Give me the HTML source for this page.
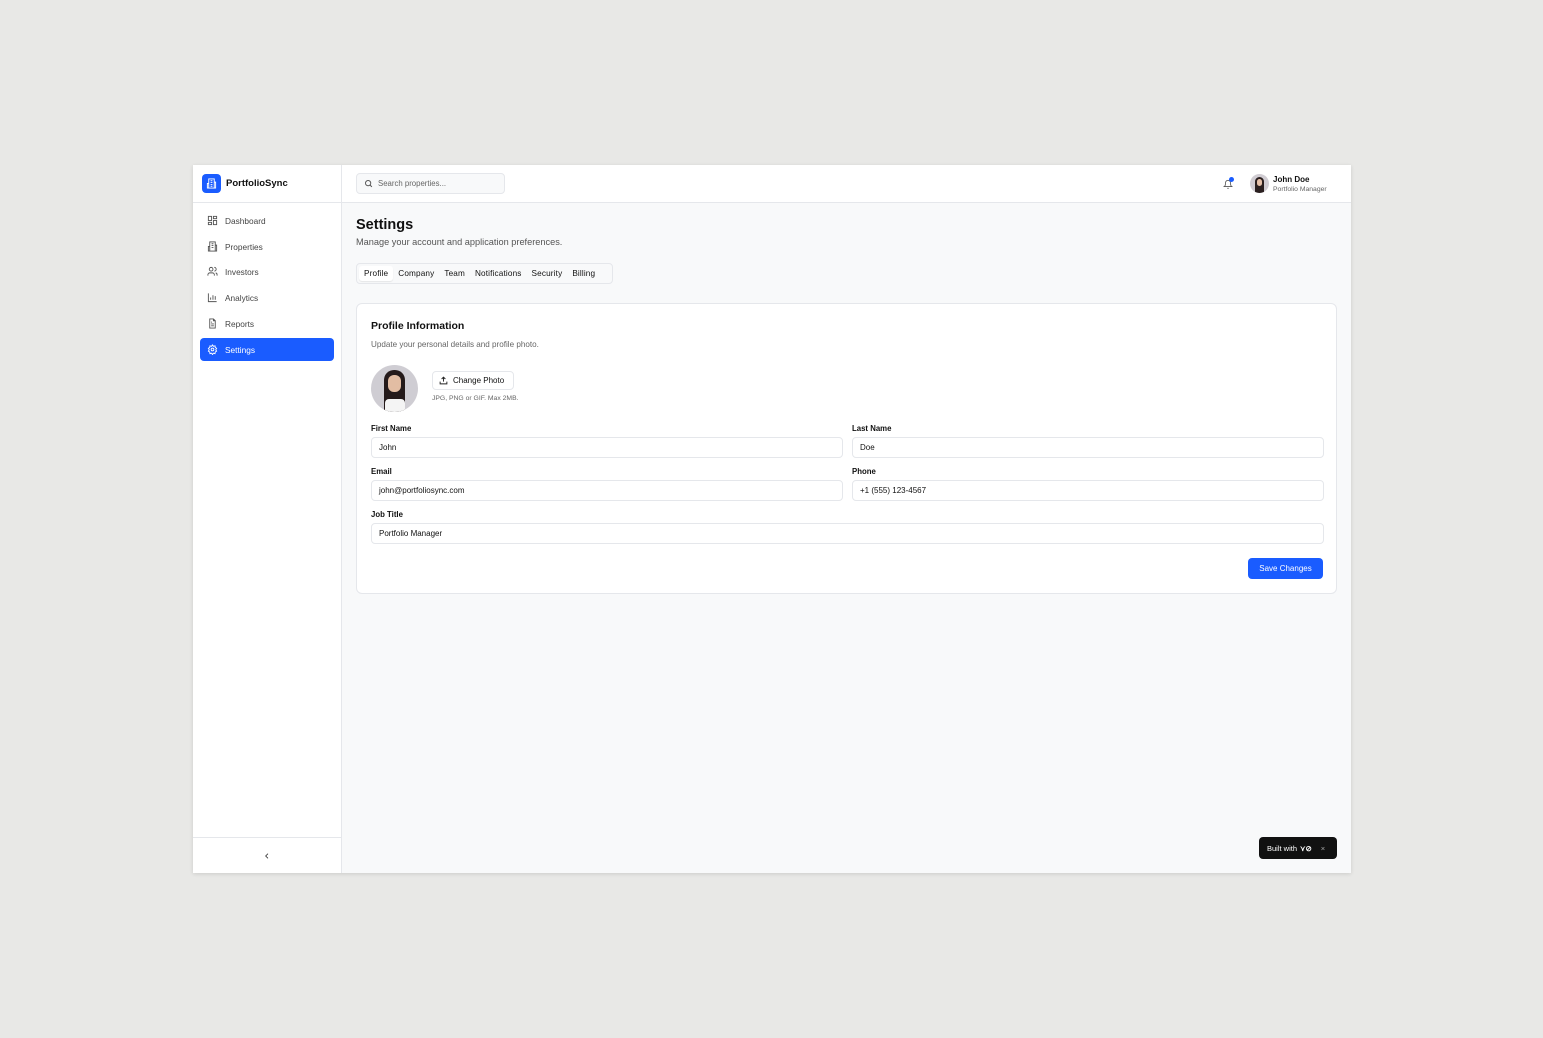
<!DOCTYPE html><html><head><style>
*{box-sizing:border-box;margin:0;padding:0}
body{width:1543px;height:1038px;background:#e8e8e6;font-family:"Liberation Sans",sans-serif;position:relative;overflow:hidden;color:#111}
.frame{position:absolute;left:193px;top:165px;width:1158px;height:708px;background:#f8f9fa;box-shadow:0 1px 4px rgba(0,0,0,.12)}
.side{position:absolute;left:0;top:0;width:149px;height:708px;background:#fff;border-right:1px solid #e5e7eb}
.logo{height:38px;border-bottom:1px solid #e5e7eb;display:flex;align-items:center;padding-left:9px;font-weight:bold;font-size:9.5px}
.logo .ic{width:19px;height:19px;background:#1a5cff;border-radius:4px;margin-right:5px;display:flex;align-items:center;justify-content:center}
.nav{position:absolute;left:7px;width:134px;height:23px;display:flex;align-items:center;padding-left:7px;font-size:8.3px;color:#444;border-radius:4px}
.nav svg{margin-right:7px}
.nav.act{background:#1a5cff;color:#fff;}
.coll{position:absolute;bottom:0;left:0;width:148px;height:36px;border-top:1px solid #e5e7eb;display:flex;align-items:center;justify-content:center}
.top{position:absolute;left:149px;top:0;right:0;height:38px;background:#fff;border-bottom:1px solid #e5e7eb}
.search{position:absolute;left:14px;top:8px;width:149px;height:21px;border:1px solid #e5e7eb;background:#f8f9fa;border-radius:4px;font-size:7.8px;color:#666;display:flex;align-items:center;padding-left:7px}
.search svg{margin-right:5px}
h1{position:absolute;left:163px;top:52px;font-size:14.5px;font-weight:bold}
.sub{position:absolute;left:163px;top:72px;font-size:9.2px;color:#555}
.tabs{position:absolute;left:163px;top:98px;width:257px;height:21px;border:1px solid #e5e7eb;border-radius:4px;background:#f8f9fa;display:flex;align-items:center;padding:0 2px;font-size:8.2px;letter-spacing:.15px}
.tabs span{padding:3px 5px}
.tabs span.a{background:#fff;border-radius:3px;box-shadow:0 1px 1px rgba(0,0,0,.08)}
.card{position:absolute;left:163px;top:138px;width:981px;height:291px;background:#fff;border:1px solid #e5e7eb;border-radius:6px}
.ct{position:absolute;left:14px;top:16px;font-size:10.5px;font-weight:bold}
.cs{position:absolute;left:14px;top:36px;font-size:8.1px;color:#666}
.lbl{position:absolute;font-size:7.8px;font-weight:bold}
.inp{position:absolute;height:21px;border:1px solid #e5e7eb;border-radius:4px;font-size:8px;display:flex;align-items:center;padding-left:7px}
.btn{position:absolute;right:13px;top:254px;width:75px;height:21px;background:#1a5cff;color:#fff;border-radius:4px;font-size:8px;display:flex;align-items:center;justify-content:center}
</style></head><body>
<div class="frame">
<div class="side">
<div class="logo"><div class="ic"><svg width="11" height="11" viewBox="0 0 24 24" fill="none" stroke="#fff" stroke-width="2"><rect x="6" y="2" width="12" height="20"/><path d="M6 12H3v10h3M18 9h3v13h-3M10 6h4M10 10h4M10 14h4M10 18h4"/></svg></div>PortfolioSync</div>
<div class="nav" style="top:44px"><svg width="11" height="11" viewBox="0 0 24 24" fill="none" stroke="#555" stroke-width="2"><rect x="3" y="3" width="7" height="9"/><rect x="14" y="3" width="7" height="5"/><rect x="14" y="12" width="7" height="9"/><rect x="3" y="16" width="7" height="5"/></svg>Dashboard</div>
<div class="nav" style="top:70px"><svg width="11" height="11" viewBox="0 0 24 24" fill="none" stroke="#555" stroke-width="2"><rect x="6" y="2" width="12" height="20"/><path d="M6 12H3v10h3M18 9h3v13h-3M10 6h4M10 10h4M10 14h4"/></svg>Properties</div>
<div class="nav" style="top:95px"><svg width="11" height="11" viewBox="0 0 24 24" fill="none" stroke="#555" stroke-width="2"><circle cx="9" cy="7" r="4"/><path d="M2 21v-2a4 4 0 0 1 4-4h6a4 4 0 0 1 4 4v2M16 3a4 4 0 0 1 0 8M22 21v-2a4 4 0 0 0-3-4"/></svg>Investors</div>
<div class="nav" style="top:121px"><svg width="11" height="11" viewBox="0 0 24 24" fill="none" stroke="#555" stroke-width="2"><path d="M3 3v18h18M8 17v-5M13 17V7M18 17v-8"/></svg>Analytics</div>
<div class="nav" style="top:147px"><svg width="11" height="11" viewBox="0 0 24 24" fill="none" stroke="#555" stroke-width="2"><path d="M14 2H6v20h12V6z"/><path d="M14 2v4h4M9 13h6M9 17h6M9 9h2"/></svg>Reports</div>
<div class="nav act" style="top:173px"><svg width="11" height="11" viewBox="0 0 24 24" fill="none" stroke="#fff" stroke-width="2"><circle cx="12" cy="12" r="3"/><path d="M12 2l2 3 3.5-1 .5 3.5 3 2-2 3 2 3-3 2-.5 3.5-3.5-1-2 3-2-3-3.5 1-.5-3.5-3-2 2-3-2-3 3-2L6.5 4 10 5z"/></svg>Settings</div>
<div class="coll"><svg width="8" height="8" viewBox="0 0 24 24" fill="none" stroke="#333" stroke-width="2.5"><path d="M15 5l-7 7 7 7"/></svg></div>
</div>
<div class="top">
<div class="search"><svg width="9" height="9" viewBox="0 0 24 24" fill="none" stroke="#555" stroke-width="2.5"><circle cx="11" cy="11" r="7"/><path d="M21 21l-5-5"/></svg>Search properties...</div>
<svg style="position:absolute;left:881px;top:14px" width="10" height="11" viewBox="0 0 24 24" fill="none" stroke="#555" stroke-width="2"><path d="M6 8a6 6 0 0 1 12 0c0 7 3 9 3 9H3s3-2 3-9M10 21h4"/></svg>
<div style="position:absolute;left:887px;top:12px;width:5px;height:5px;border-radius:50%;background:#1a5cff"></div>
<div style="position:absolute;left:908px;top:9px;width:19px;height:19px;border-radius:50%;background:#d0ccd2;overflow:hidden"><div style="position:absolute;left:5px;top:3px;width:9px;height:16px;background:#2a1f1f;border-radius:5px 5px 0 0"></div><div style="position:absolute;left:7px;top:5px;width:5px;height:7px;background:#e5c0a8;border-radius:3px"></div></div>
<div style="position:absolute;left:931px;top:10px;font-size:8px;font-weight:bold">John Doe</div>
<div style="position:absolute;left:931px;top:21px;font-size:6.8px;color:#666">Portfolio Manager</div>
</div>
<h1>Settings</h1>
<div class="sub">Manage your account and application preferences.</div>
<div class="tabs"><span class="a">Profile</span><span>Company</span><span>Team</span><span>Notifications</span><span>Security</span><span>Billing</span></div>
<div class="card">
<div class="ct">Profile Information</div>
<div class="cs">Update your personal details and profile photo.</div>
<div style="position:absolute;left:14px;top:61px;width:47px;height:47px;border-radius:50%;background:#cfcdd3;overflow:hidden"><div style="position:absolute;left:13px;top:5px;width:21px;height:42px;background:#241a1a;border-radius:10px 10px 0 0"></div><div style="position:absolute;left:17px;top:10px;width:13px;height:17px;background:#e2bda3;border-radius:6px"></div><div style="position:absolute;left:14px;top:34px;width:20px;height:14px;background:#f4f4f4;border-radius:4px 4px 0 0"></div></div>
<div style="position:absolute;left:75px;top:67px;width:82px;height:19px;border:1px solid #e5e7eb;border-radius:4px;font-size:8px;display:flex;align-items:center;padding-left:6px"><svg style="margin-right:5px" width="9" height="9" viewBox="0 0 24 24" fill="none" stroke="#222" stroke-width="2.5"><path d="M12 15V3M7 8l5-5 5 5M3 15v6h18v-6"/></svg>Change Photo</div>
<div style="position:absolute;left:75px;top:91px;font-size:6.8px;color:#666">JPG, PNG or GIF. Max 2MB.</div>
<div class="lbl" style="left:14px;top:120px">First Name</div><div class="inp" style="left:14px;top:133px;width:472px">John</div>
<div class="lbl" style="left:495px;top:120px">Last Name</div><div class="inp" style="left:495px;top:133px;width:472px">Doe</div>
<div class="lbl" style="left:14px;top:163px">Email</div><div class="inp" style="left:14px;top:176px;width:472px">john@portfoliosync.com</div>
<div class="lbl" style="left:495px;top:163px">Phone</div><div class="inp" style="left:495px;top:176px;width:472px">+1 (555) 123-4567</div>
<div class="lbl" style="left:14px;top:206px">Job Title</div><div class="inp" style="left:14px;top:219px;width:953px">Portfolio Manager</div>
<div class="btn">Save Changes</div>
</div>
<div style="position:absolute;left:1066px;top:672px;width:78px;height:22px;background:#111;border-radius:4px;color:#fff;font-size:7.5px;display:flex;align-items:center;padding-left:8px">Built with <b style="margin-left:3px">⋎⊘</b><span style="margin-left:9px;color:#aaa">×</span></div>
</div>
</body></html>
